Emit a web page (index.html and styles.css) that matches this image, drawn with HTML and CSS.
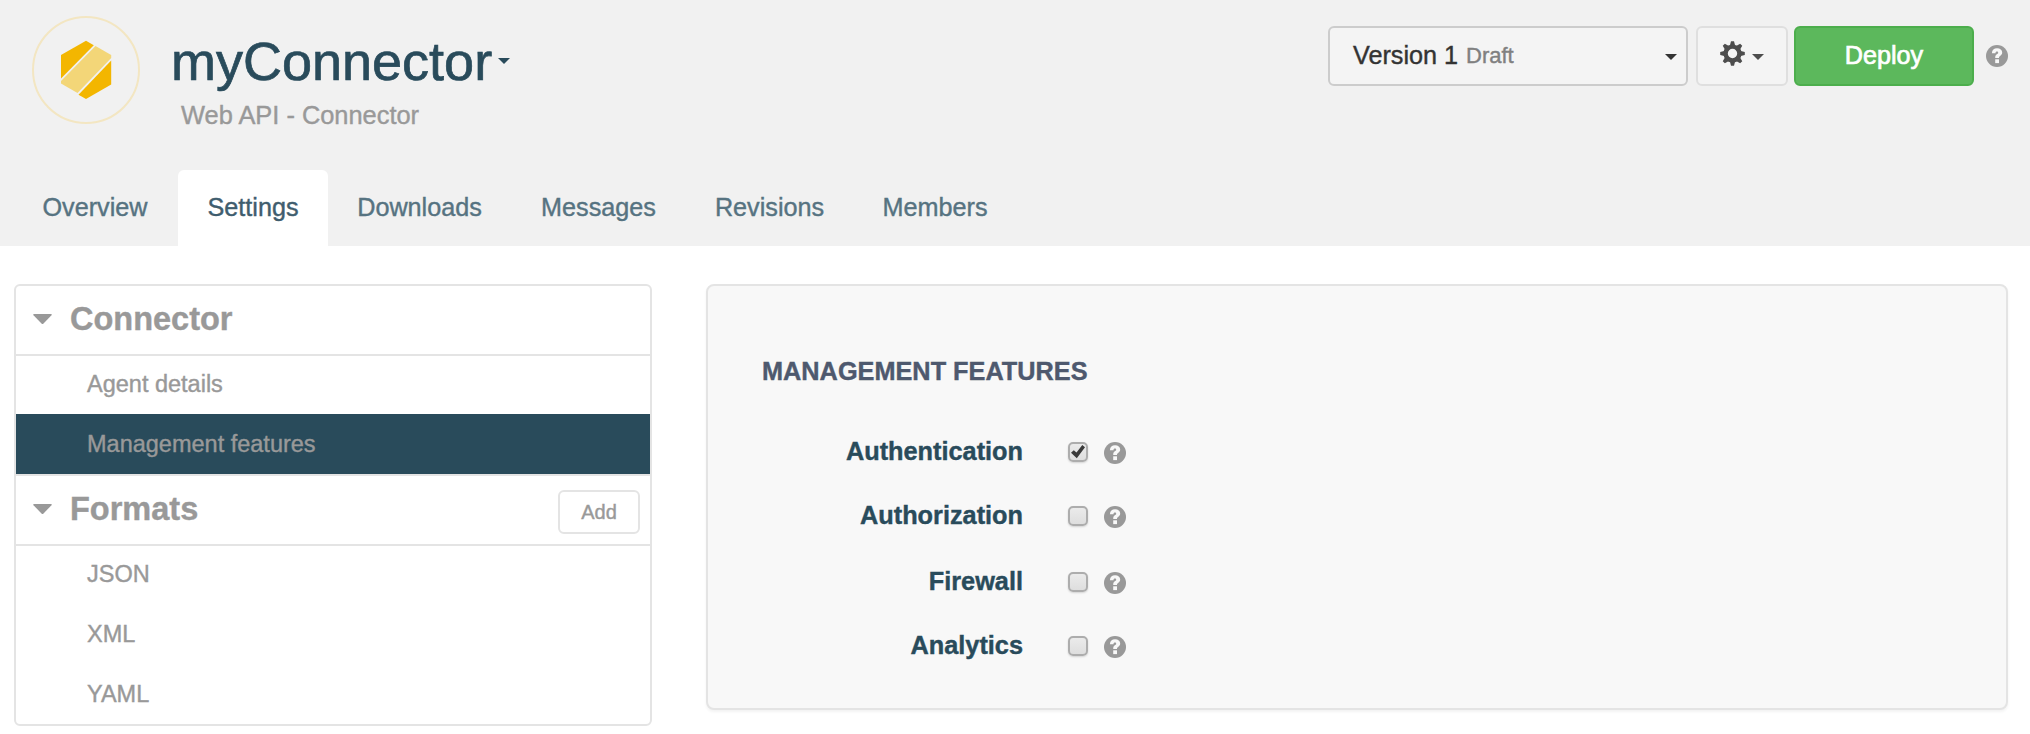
FILE: index.html
```html
<!DOCTYPE html>
<html lang="en">
<head>
<meta charset="utf-8">
<title>myConnector - Settings</title>
<link rel="stylesheet" href="styles.css">
</head>
<body>
<svg class="defs" width="0" height="0" aria-hidden="true">
  <symbol id="help" viewBox="0 0 22 22">
    <circle cx="11" cy="11" r="11" fill="#999"/>
    <path d="M5.900 8.200C6 5 8 3.300 11.100 3.300c3 0 5.100 1.700 5.100 4.200 0 1.800-1 2.700-2.100 3.500-.9.600-1.100.9-1.100 1.900H9.200c0-2.200.5-2.900 1.900-3.800.8-.5 1.100-.8 1.100-1.400 0-.7-.5-1.100-1.200-1.100-1 0-1.500.6-1.600 1.600z" fill="#f8f8f8"/>
    <rect x="9.200" y="14.300" width="3.800" height="3.800" fill="#f8f8f8"/>
  </symbol>
</svg>
<header class="header">
  <div class="top">
    <svg class="logo" viewBox="32 16 108 108">
      <circle cx="86" cy="70" r="53" fill="none" stroke="#f3e6c2" stroke-width="2"/>
      <path d="M86 40.700 93.800 45.200 61 78.500V55z" fill="#f3b600"/>
      <path d="M95.500 46.100 111.200 55v3L77.500 93 61 83.500V81z" fill="#f3d678"/>
      <path d="M111.200 60.500v24L86 99l-7.500-4.300z" fill="#f3b600"/>
    </svg>
    <div class="heading">
      <h1 class="title">myConnector<svg class="title-caret" viewBox="0 0 12 6"><path d="M0 0h12L6 6z"/></svg></h1>
      <p class="subtitle">Web API - Connector</p>
    </div>
    <div class="actions">
      <button class="version"><span>Version 1</span><small>Draft</small><svg class="caret" viewBox="0 0 12 6"><path d="M0 0h12L6 6z"/></svg></button>
      <button class="gear">
        <svg class="cog" viewBox="-12.500 -12.500 25 25">
          <path id="t" d="M-1.500-12.300h3l1.300 5h-5.600zM-1.500 12.300h3l1.300-5h-5.600z"/>
          <use href="#t" transform="rotate(45)"/><use href="#t" transform="rotate(90)"/><use href="#t" transform="rotate(135)"/>
          <circle r="6.900" fill="none" stroke="#4d4d4d" stroke-width="4.400"/>
        </svg>
        <svg class="caret" viewBox="0 0 12 6"><path d="M0 0h12L6 6z"/></svg>
      </button>
      <button class="deploy">Deploy</button>
      <svg class="help"><use href="#help"/></svg>
    </div>
  </div>
  <nav class="tabs">
    <a class="tab w-overview">Overview</a>
    <a class="tab w-settings active">Settings</a>
    <a class="tab w-downloads">Downloads</a>
    <a class="tab w-messages">Messages</a>
    <a class="tab w-revisions">Revisions</a>
    <a class="tab w-members">Members</a>
  </nav>
</header>
<main class="main">
  <aside class="sidebar">
    <div class="group"><svg class="arrow" viewBox="0 0 19 10"><path d="M1 0h17q1.500 0 .5 1.200L10.500 9.500q-1 1-2 0L.5 1.200Q-.5 0 1 0z"/></svg><h2>Connector</h2></div>
    <ul class="items">
      <li>Agent details</li>
      <li class="selected">Management features</li>
    </ul>
    <div class="group divided"><svg class="arrow" viewBox="0 0 19 10"><path d="M1 0h17q1.500 0 .5 1.200L10.500 9.500q-1 1-2 0L.5 1.200Q-.5 0 1 0z"/></svg><h2>Formats</h2><button class="add">Add</button></div>
    <ul class="items">
      <li>JSON</li>
      <li>XML</li>
      <li>YAML</li>
    </ul>
  </aside>
  <section class="panel">
    <h3 class="panel-title">MANAGEMENT FEATURES</h3>
    <div class="feature"><label>Authentication</label><span class="check"><svg viewBox="0 0 16 16"><path d="M1 8.800 3.800 6.300l2.700 2.200L12.300 1 15 3.200 6.800 14.200z" fill="#3a3a3a"/></svg></span><svg class="help"><use href="#help"/></svg></div>
    <div class="feature tall"><label>Authorization</label><span class="check"></span><svg class="help"><use href="#help"/></svg></div>
    <div class="feature"><label>Firewall</label><span class="check"></span><svg class="help"><use href="#help"/></svg></div>
    <div class="feature"><label>Analytics</label><span class="check"></span><svg class="help"><use href="#help"/></svg></div>
  </section>
</main>
</body>
</html>
```
FILE: styles.css
```css
* { box-sizing: border-box; margin: 0; padding: 0; }
body { background: #fff; font-family: "Liberation Sans", Arial, sans-serif; font-size: 25.3px; color: #999; -webkit-text-stroke: .4px currentColor; }
button { font: inherit; border-radius: 6px; }
.defs { position: absolute; }
.help { width: 22px; height: 22px; flex: none; }

.header { height: 246px; background: #f1f1f1; display: flex; flex-direction: column; justify-content: space-between; }
.top { display: flex; align-items: flex-start; padding: 16px 22px 0 32px; }
.logo { width: 108px; height: 108px; flex: none; }
.heading { margin: 15px 0 0 31px; }
.title { display: flex; align-items: center; font-size: 54px; font-weight: 400; line-height: 60px; color: #294b5b; -webkit-text-stroke-width: .7px; }
.title-caret { width: 12px; height: 6px; margin-left: 6px; fill: #294b5b; }
.subtitle { margin: 9px 0 0 10px; font-size: 25.4px; line-height: 30px; white-space: nowrap; }

.actions { display: flex; align-items: center; margin: 10px 0 0 auto; color: #333; }
.version { display: flex; align-items: center; width: 360px; height: 60px; padding: 0 9px 0 23px; border: 2px solid #ccc; background: #f4f4f4; color: #333; font-size: 25.2px; line-height: 54px; }
.version span, .version small { height: 56px; }
.version small { margin-left: 8px; font-size: 22px; line-height: 56px; color: #808080; }
.caret { width: 12px; height: 6px; margin-top: 2px; fill: #333; }
.version .caret { margin-left: auto; }
.gear { display: flex; align-items: center; width: 92px; height: 60px; margin-left: 8px; padding-left: 22px; border: 2px solid #dfdfdf; background: #f4f4f4; }
.cog { width: 25px; height: 25px; margin-bottom: 5px; fill: #4d4d4d; }
.gear .caret { margin-left: 7px; fill: #4d4d4d; }
.deploy { width: 180px; height: 60px; padding-bottom: 2px; margin-left: 6px; border: 2px solid #4cae4c; background: #5cb85c; color: #fff; font-size: 25.2px; line-height: 54px; -webkit-text-stroke: .7px #fff; }
.actions .help { margin-left: 12px; }

.tabs { display: flex; padding-left: 12px; }
.tab { height: 76px; line-height: 74px; font-size: 25.2px; text-align: center; color: #567381; border-radius: 6px 6px 0 0; }
.tab.active { background: #fff; color: #3f5d6e; }
.w-overview { width: 166px; }
.w-settings { width: 150px; }
.w-downloads { width: 183px; }
.w-messages { width: 175px; }
.w-revisions { width: 167px; }
.w-members { width: 164px; }

.main { display: flex; align-items: flex-start; justify-content: space-between; padding: 38px 22px 0 14px; }
.sidebar { width: 638px; height: 442px; border: 2px solid #e4e4e4; border-radius: 6px; overflow: hidden; }
.group { display: flex; align-items: center; height: 70px; padding: 0 10px 0 17px; border-bottom: 2px solid #e4e4e4; }
.group.divided { height: 72px; border-top: 2px solid #e4e4e4; }
.arrow { width: 19px; height: 10px; margin-bottom: 2px; fill: #999; }
.group h2 { margin: 0 0 3px 18px; font-size: 32.5px; line-height: 60px; }
.add { width: 82px; height: 44px; margin: 4px 0 0 auto; border: 2px solid #e4e4e4; background: #fff; color: #999; font-size: 20px; }
.items { list-style: none; font-size: 23.500px; }
.items li { height: 60px; padding-left: 71px; line-height: 60px; }
.items li:first-child { margin-top: -2px; }
.items .selected { background: #294b5b; }

.panel { width: 1302px; height: 426px; padding: 69px 54px 0; border: 2px solid #e4e4e4; border-radius: 8px; background: #f8f8f8; box-shadow: 0 2px 3px rgba(0,0,0,.05); }
.panel-title { font-size: 25.3px; line-height: 32px; color: #4e596e; margin-bottom: 34px; }
.feature { display: flex; align-items: center; height: 64px; }
.feature.tall { height: 66px; padding-bottom: 2px; }
.feature label { width: 261px; margin-bottom: 3px; text-align: right; font-weight: 700; color: #294b5b; }
.check { width: 20px; height: 20px; margin: 0 16px 2px 45px; border: 2px solid #adadad; border-radius: 5px; background: linear-gradient(#ebebeb, #dedede); box-shadow: 0 1px 2px rgba(0,0,0,.15); }
.check svg { display: block; width: 16px; height: 16px; }
```
